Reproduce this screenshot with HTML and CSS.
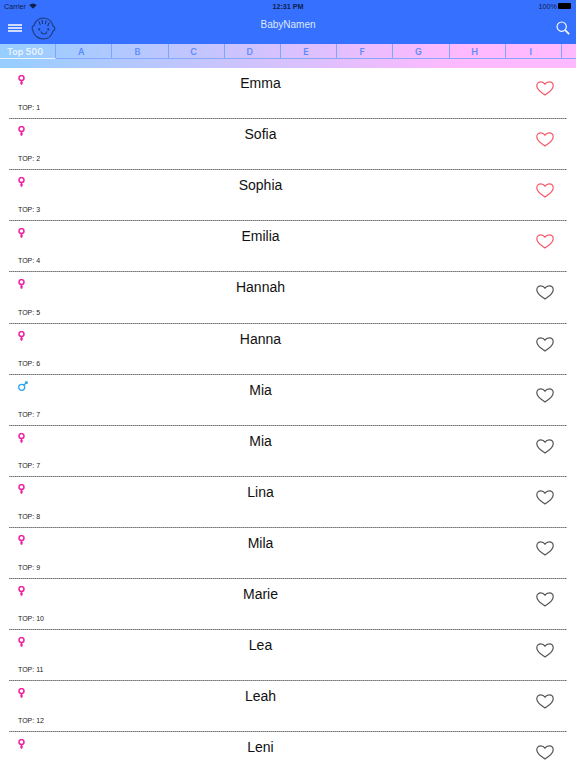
FILE: index.html
```html
<!DOCTYPE html>
<html lang="de">
<head>
<meta charset="utf-8">
<title>BabyNamen</title>
<link rel="stylesheet" href="styles.css">
</head>
<body>
<svg class="defs" width="0" height="0" aria-hidden="true">
  <defs>
    <symbol id="female" viewBox="0 0 7 10">
      <circle cx="3.500" cy="3.100" r="2.500" fill="none" stroke="currentColor" stroke-width="1.500"/>
      <path d="M3.500 5.500V9.800" fill="none" stroke="currentColor" stroke-width="1.600"/>
      <path d="M2.200 7.900H4.800" fill="none" stroke="currentColor" stroke-width="1.200"/>
    </symbol>
    <symbol id="male" viewBox="0 0 10 10">
      <circle cx="3.700" cy="6.300" r="3" fill="none" stroke="currentColor" stroke-width="1.300"/>
      <path d="M5.800 4.200L8 2" stroke="currentColor" stroke-width="1.300"/>
      <rect x="7" y="0.300" width="2.700" height="2.700" fill="currentColor"/>
    </symbol>
    <symbol id="heart" viewBox="0 0 18 15">
      <path d="M9 14.100C6.800 12.400 0.800 9.200 0.800 4.700 0.800 2.300 2.600 0.800 4.800 0.800 6.600 0.800 8.100 1.700 9 3.100 9.900 1.700 11.400 0.800 13.200 0.800 15.400 0.800 17.200 2.300 17.200 4.700 17.200 9.200 11.200 12.400 9 14.100Z" fill="none" stroke="currentColor" stroke-width="1.200"/>
    </symbol>
  </defs>
</svg>
<header class="top">
  <div class="status">
    <div class="status-left">
      <span>Carrier</span>
      <svg class="wifi" viewBox="0 0 12 9"><path d="M6 8.600L0.400 3A8 8 0 0 1 11.600 3Z" fill="#10204a"/></svg>
    </div>
    <span class="clock">12:31 PM</span>
    <div class="status-right">
      <span>100%</span>
      <span class="battery"></span>
    </div>
  </div>
  <div class="nav">
    <div class="nav-left">
      <div class="burger"><i></i><i></i><i></i></div>
      <svg class="baby" viewBox="0 0 26 24">
        <g fill="none" stroke="#1f3a78" stroke-width="1.200" stroke-linecap="round">
          <path d="M3.200 8.500C4.800 3.500 9 1 13 1 18.500 1 22 5 23 9.500 25.200 10 25.500 13.800 23 14.500 21.500 19.500 17.500 23 12.800 23 7.500 23 3.200 19.500 2 14.500 0.300 12 1.200 9.500 3.200 8.500Z"/>
          <path d="M9.500 8L8.300 4.800M12 6.800L11.500 3.200M15 7L15.800 3.800M17.500 9L19 6"/>
          <path d="M10.500 15.500C11.500 18.500 15.500 18.500 16.500 15.500"/>
        </g>
        <circle cx="8.500" cy="13" r="1.200" fill="#1f3a78"/>
        <circle cx="18" cy="13" r="1.200" fill="#1f3a78"/>
      </svg>
    </div>
    <h1 class="title">BabyNamen</h1>
    <svg class="search" viewBox="0 0 16 16">
      <circle cx="6.500" cy="6.500" r="5.300" fill="none" stroke="#fff" stroke-width="1.300"/>
      <path d="M10.400 10.400L15 15" stroke="#fff" stroke-width="1.800"/>
    </svg>
  </div>
</header>
<div class="tabs-wrap">
  <nav class="tabs">
    <span class="tab tab-active">Top 500</span>
    <span class="tab">A</span>
    <span class="tab">B</span>
    <span class="tab">C</span>
    <span class="tab">D</span>
    <span class="tab">E</span>
    <span class="tab">F</span>
    <span class="tab">G</span>
    <span class="tab">H</span>
    <span class="tab">I</span>
    <span class="tab"></span>
  </nav>
</div>
<main class="list">
  <article class="row"><svg class="g g-f"><use href="#female"/></svg><span class="name">Emma</span><svg class="heart heart-on"><use href="#heart"/></svg><span class="rank">TOP: 1</span></article>
  <article class="row"><svg class="g g-f"><use href="#female"/></svg><span class="name">Sofia</span><svg class="heart heart-on"><use href="#heart"/></svg><span class="rank">TOP: 2</span></article>
  <article class="row"><svg class="g g-f"><use href="#female"/></svg><span class="name">Sophia</span><svg class="heart heart-on"><use href="#heart"/></svg><span class="rank">TOP: 3</span></article>
  <article class="row"><svg class="g g-f"><use href="#female"/></svg><span class="name">Emilia</span><svg class="heart heart-on"><use href="#heart"/></svg><span class="rank">TOP: 4</span></article>
  <article class="row"><svg class="g g-f"><use href="#female"/></svg><span class="name">Hannah</span><svg class="heart"><use href="#heart"/></svg><span class="rank">TOP: 5</span></article>
  <article class="row"><svg class="g g-f"><use href="#female"/></svg><span class="name">Hanna</span><svg class="heart"><use href="#heart"/></svg><span class="rank">TOP: 6</span></article>
  <article class="row"><svg class="g g-m"><use href="#male"/></svg><span class="name">Mia</span><svg class="heart"><use href="#heart"/></svg><span class="rank">TOP: 7</span></article>
  <article class="row"><svg class="g g-f"><use href="#female"/></svg><span class="name">Mia</span><svg class="heart"><use href="#heart"/></svg><span class="rank">TOP: 7</span></article>
  <article class="row"><svg class="g g-f"><use href="#female"/></svg><span class="name">Lina</span><svg class="heart"><use href="#heart"/></svg><span class="rank">TOP: 8</span></article>
  <article class="row"><svg class="g g-f"><use href="#female"/></svg><span class="name">Mila</span><svg class="heart"><use href="#heart"/></svg><span class="rank">TOP: 9</span></article>
  <article class="row"><svg class="g g-f"><use href="#female"/></svg><span class="name">Marie</span><svg class="heart"><use href="#heart"/></svg><span class="rank">TOP: 10</span></article>
  <article class="row"><svg class="g g-f"><use href="#female"/></svg><span class="name">Lea</span><svg class="heart"><use href="#heart"/></svg><span class="rank">TOP: 11</span></article>
  <article class="row"><svg class="g g-f"><use href="#female"/></svg><span class="name">Leah</span><svg class="heart"><use href="#heart"/></svg><span class="rank">TOP: 12</span></article>
  <article class="row"><svg class="g g-f"><use href="#female"/></svg><span class="name">Leni</span><svg class="heart"><use href="#heart"/></svg></article>
</main>
</body>
</html>
```
FILE: styles.css
```css
* { box-sizing: border-box; margin: 0; padding: 0; }
html, body { height: 768px; overflow: hidden; background: #fff; }
body { font-family: "Liberation Sans", Arial, sans-serif; color: #000; }
.defs { position: absolute; }

.top { height: 44px; background: #3670ff; }
.status { height: 12px; padding: 0 4px; display: grid; grid-template-columns: 1fr auto 1fr; align-items: center; font-size: 7.200px; color: #10204a; }
.status-left { display: flex; align-items: center; gap: 3px; }
.wifi { width: 8px; height: 6px; }
.clock { font-weight: 700; }
.status-right { display: flex; justify-content: flex-end; align-items: center; gap: 1px; }
.battery { width: 13px; height: 6px; background: #000; border-radius: 1px; margin-right: 1px; }

.nav { height: 32px; padding: 0 6px; display: grid; grid-template-columns: 1fr auto 1fr; align-items: center; }
.nav-left { display: flex; align-items: center; gap: 9px; padding-left: 2px; }
.burger { display: flex; flex-direction: column; gap: 1.500px; width: 14px; }
.burger i { display: block; height: 1.500px; background: #cfdcff; }
.baby { width: 25px; height: 23px; }
.title { font-size: 10px; font-weight: 400; color: #dde8ff; margin-top: -8px; }
.search { width: 14px; height: 14px; justify-self: end; }

.tabs-wrap { height: 24px; overflow: hidden; background: linear-gradient(90deg, #96ceff 0%, #ffb9fe 80%, #ffb9fe 100%); }
.tabs { height: 15px; display: flex; }
.tab { flex: 0 0 56.200px; padding-right: 5px; display: flex; align-items: center; justify-content: center; font-family: Inter, "Liberation Sans", sans-serif; font-size: 9px; font-weight: 600; color: #5b8bff; border-right: 1px solid #7fa6ff; border-bottom: 1px solid #86a8ff; }
.tab-active { color: #eaf4ff; border-bottom: 1px solid #e8f2ff; }

.list { display: block; }
.row { height: 51.120px; padding: 0 9px; display: grid; grid-template-columns: 9px 1fr 40px; grid-template-rows: 1fr auto; background-image: repeating-linear-gradient(90deg, #777 0 1px, #aaa 1px 2px); background-size: 100% 1px; background-repeat: no-repeat; background-position: 0 bottom; background-origin: content-box; background-clip: content-box; }
.g { width: 7px; height: 10px; margin: 7px 0 0 9px; }
.g-f { color: #f01fa0; }
.g-m { color: #2ca6ee; width: 10px; height: 10px; margin-top: 6px; }
.name { font-size: 14px; line-height: 18px; text-align: center; padding-top: 6px; padding-right: 24px; color: #111; }
.heart { width: 18px; height: 15px; margin: 13px 5px 0 0; justify-self: center; color: #555; }
.heart-on { color: #f55866; }
.rank { grid-column: 1 / -1; font-size: 7px; line-height: 9px; margin: 0 0 7px 9px; color: #222; }
```
